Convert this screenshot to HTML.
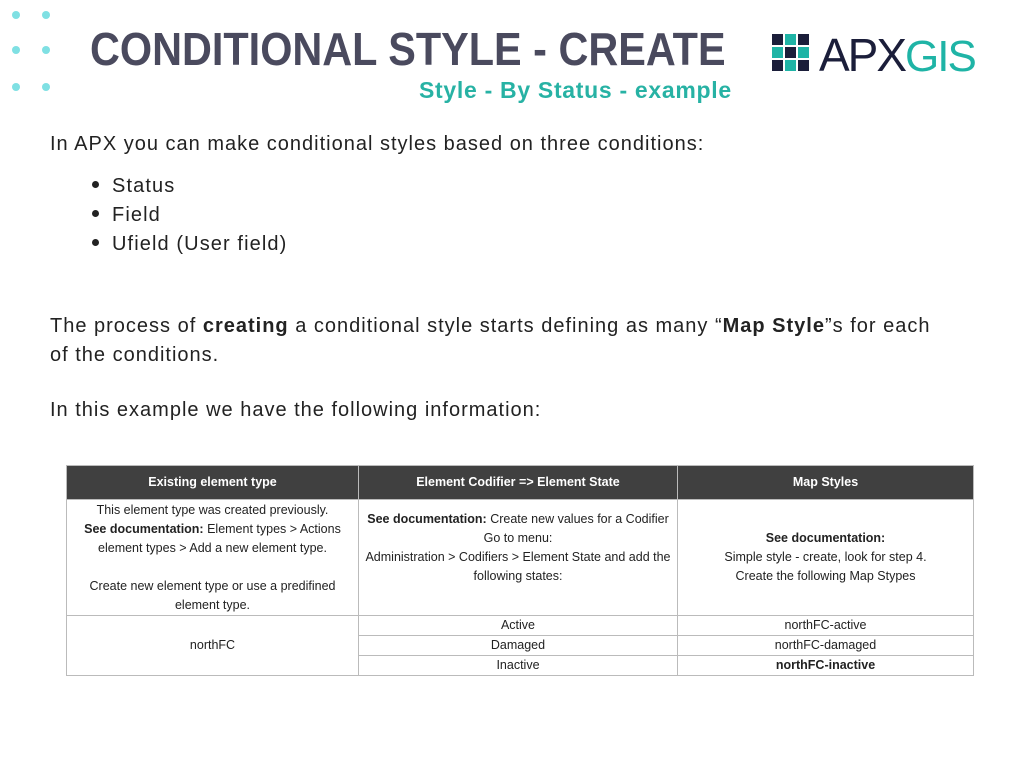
<!DOCTYPE html>
<html><head><meta charset="utf-8"><style>
*{margin:0;padding:0;box-sizing:border-box}
body{width:1024px;height:768px;background:#fff;position:relative;overflow:hidden;font-family:"Liberation Sans",sans-serif;color:#222}
.dot{position:absolute;width:8px;height:8px;border-radius:50%;background:#7fe0e3}
.abs{position:absolute;white-space:nowrap}
h1{position:absolute;left:90px;top:22px;font-size:46px;font-weight:bold;color:#4a4a5e;white-space:nowrap;transform:scaleX(0.9);transform-origin:0 0}
.sub{left:419px;top:77px;font-size:23px;font-weight:bold;color:#27b2a4;letter-spacing:0.7px}
.p{font-size:20px;color:#222;letter-spacing:1px}
ul{position:absolute;left:92px;top:172px;font-size:20px;line-height:29px;list-style:none;letter-spacing:1.1px}
ul li:before{content:"";display:inline-block;width:7px;height:7px;border-radius:50%;background:#222;margin-right:13px;vertical-align:middle;position:relative;top:-2px}
table{position:absolute;left:66px;top:465px;width:908px;border-collapse:collapse;font-family:"Liberation Sans Narrow","Liberation Sans",sans-serif;font-size:12.5px;text-align:center;color:#222}
td,th{border:1px solid #bbb;padding:0 4px;line-height:19px}
th{background:#404040;color:#fff;height:34px;font-weight:bold}
.grid{position:absolute;left:772px;top:34px;display:grid;grid-template-columns:repeat(3,11px);grid-template-rows:repeat(3,11px);gap:2px}
.d{background:#1b1e3a}.t{background:#1fb4a6}
</style></head><body>
<div class="dot" style="left:12px;top:11px"></div><div class="dot" style="left:42px;top:11px"></div>
<div class="dot" style="left:12px;top:46px"></div><div class="dot" style="left:42px;top:46px"></div>
<div class="dot" style="left:12px;top:83px"></div><div class="dot" style="left:42px;top:83px"></div>
<h1>CONDITIONAL STYLE - CREATE</h1>
<div class="grid"><i class="d"></i><i class="t"></i><i class="d"></i><i class="t"></i><i class="d"></i><i class="t"></i><i class="d"></i><i class="t"></i><i class="d"></i></div>
<div class="abs" style="left:819px;top:28px;font-size:46px;color:#1b1e3a;letter-spacing:-2px">APX<span style="color:#1fb4a6;letter-spacing:-2px;font-size:44px">GIS</span></div>
<div class="abs sub">Style - By Status - example</div>
<div class="abs p" style="left:50px;top:133px">In APX you can make conditional styles based on three conditions:</div>
<ul><li>Status</li><li>Field</li><li>Ufield (User field)</li></ul>
<div class="abs p" style="left:50px;top:312px;line-height:29px">The process of <b>creating</b> a conditional style starts defining as many “<b>Map Style</b>”s for each<br>of the conditions.</div>
<div class="abs p" style="left:50px;top:399px">In this example we have the following information:</div>
<table>
<tr><th style="width:292px">Existing element type</th><th style="width:319px">Element Codifier =&gt; Element State</th><th>Map Styles</th></tr>
<tr style="height:116px"><td>This element type was created previously.<br><b>See documentation:</b> Element types &gt; Actions<br>element types &gt; Add a new element type.<br><br>Create new element type or use a predifined<br>element type.</td>
<td style="vertical-align:top;padding-top:10px"><b>See documentation:</b> Create new values for a Codifier<br>Go to menu:<br>Administration &gt; Codifiers &gt; Element State and add the<br>following states:</td>
<td><b>See documentation:</b><br>Simple style - create, look for step 4.<br>Create the following Map Stypes</td></tr>
<tr><td rowspan="3">northFC</td><td>Active</td><td>northFC-active</td></tr>
<tr><td>Damaged</td><td>northFC-damaged</td></tr>
<tr><td>Inactive</td><td><b>northFC-inactive</b></td></tr>
</table>
</body></html>
